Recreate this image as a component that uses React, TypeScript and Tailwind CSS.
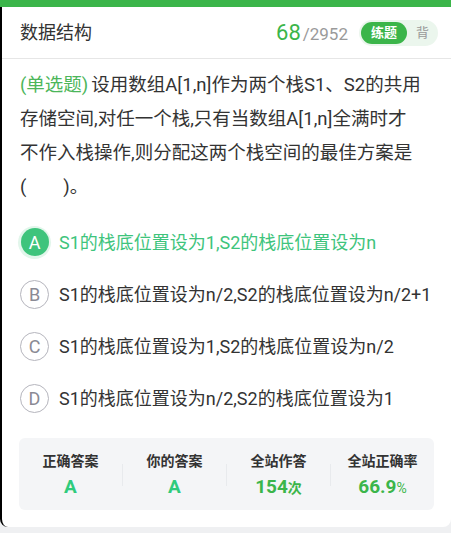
const options = [
  { key: 'A', text: 'S1的栈底位置设为1,S2的栈底位置设为n' },
  { key: 'B', text: 'S1的栈底位置设为n/2,S2的栈底位置设为n/2+1' },
  { key: 'C', text: 'S1的栈底位置设为1,S2的栈底位置设为n/2' },
  { key: 'D', text: 'S1的栈底位置设为n/2,S2的栈底位置设为1' },
]

const selected = 'A'

function StatCol({ label, children }: { label: string; children: React.ReactNode }) {
  return (
    <div className="flex flex-1 flex-col items-center">
      <div className="text-[14px] leading-[22px] font-bold text-[#333]">{label}</div>
      <div className="mt-[2px] h-[26px] leading-[26px]">{children}</div>
    </div>
  )
}

function Divider() {
  return <div className="h-[22px] w-px self-center bg-[#e8eaed]" />
}

export default function App() {
  return (
    <div
      className="min-h-screen w-[451px] bg-[#eff0f2]"
      style={{ fontFamily: 'Roboto, "Noto Sans CJK SC", sans-serif' }}
    >
      <div className="h-[7px] bg-[#3bb54a]" />
      <div className="rounded-b-[8px] border-l-2 border-black bg-white pb-[17px]">
        {/* header */}
        <div className="flex h-[52px] items-center border-b border-[#e6e6e6] pl-[18px] pr-[13px]">
          <div className="text-[18px] text-[#333]">数据结构</div>
          <div className="ml-auto flex items-baseline">
            <span className="text-[22px] text-[#3bb54a]">68</span>
            <span className="ml-[2px] text-[17px] text-[#9a9a9a]">/2952</span>
          </div>
          <div className="ml-[11px] flex h-[26px] items-center rounded-full bg-[#ebf6ed] p-[2px] pr-[9px]">
            <div className="flex h-[22px] w-[46px] items-center justify-center rounded-full bg-[#3bb54a] text-[13px] font-bold text-white">
              练题
            </div>
            <div className="ml-[9px] text-[13px] text-[#9a9a9a]">背</div>
          </div>
        </div>

        {/* question - line breaks follow the app's wrapping */}
        <div className="pl-[18px] pr-[10px] pt-[9px] text-[18.5px] leading-[34px] text-[#333]">
          <span className="pr-[3px] text-[#4cb65a]">(单选题)</span>设用数组A[1,n]作为两个栈S1、S2的共用
          <br />
          存储空间,对任一个栈,只有当数组A[1,n]全满时才
          <br />
          不作入栈操作,则分配这两个栈空间的最佳方案是
          <br />
          (　　)。
        </div>

        {/* options */}
        <div className="mt-[12px]">
          {options.map((o) => {
            const active = o.key === selected
            return (
              <div key={o.key} className="flex h-[52px] items-center pl-[16px]">
                {active ? (
                  <div className="flex h-[33px] w-[33px] items-center justify-center rounded-full bg-[#e2f6eb]">
                    <div className="flex h-[28px] w-[28px] items-center justify-center rounded-full bg-[#3ec47c] text-[18px] text-white">
                      {o.key}
                    </div>
                  </div>
                ) : (
                  <div className="flex h-[33px] w-[33px] items-center justify-center">
                    <div className="flex h-[29px] w-[29px] items-center justify-center rounded-full border border-[#b5b5bd] text-[18px] text-[#8a8a94]">
                      {o.key}
                    </div>
                  </div>
                )}
                <div className={`ml-[8px] text-[18px] ${active ? 'text-[#3ec47c]' : 'text-[#333]'}`}>{o.text}</div>
              </div>
            )
          })}
        </div>

        {/* stats */}
        <div className="mx-[17px] mt-[14px] flex h-[72px] rounded-[6px] bg-[#f4f5f7] pt-[12px] pb-[10px]">
          <StatCol label="正确答案">
            <span className="text-[19px] font-bold text-[#2fcb7c]">A</span>
          </StatCol>
          <Divider />
          <StatCol label="你的答案">
            <span className="text-[19px] font-bold text-[#2fcb7c]">A</span>
          </StatCol>
          <Divider />
          <StatCol label="全站作答">
            <span className="text-[19px] font-bold text-[#3bb54a]">154</span>
            <span className="text-[14px] font-bold text-[#3bb54a]">次</span>
          </StatCol>
          <Divider />
          <StatCol label="全站正确率">
            <span className="text-[19px] font-bold text-[#3bb54a]">66.9</span>
            <span className="text-[14px] text-[#3bb54a]">%</span>
          </StatCol>
        </div>
      </div>
    </div>
  )
}
